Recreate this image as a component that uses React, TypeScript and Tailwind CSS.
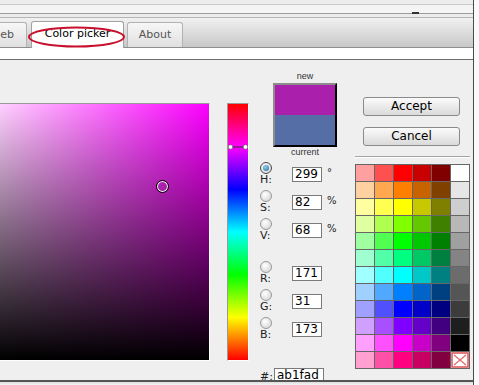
import React from "react";

const palette = [
  ["#ffa0a0", "#ff5050", "#ff0000", "#c80000", "#800000", "#ffffff"],
  ["#ffd0a0", "#ffa850", "#ff8000", "#c86400", "#804000", "#e6e6e6"],
  ["#ffffa0", "#ffff50", "#ffff00", "#c8c800", "#808000", "#cecece"],
  ["#e0ffa0", "#b0ff50", "#80ff00", "#64c800", "#408000", "#b8b8b8"],
  ["#a0ffa0", "#50ff50", "#00ff00", "#00c800", "#008000", "#a0a0a0"],
  ["#a0ffd0", "#50ffa8", "#00ff80", "#00c864", "#008040", "#848484"],
  ["#a0ffff", "#50ffff", "#00ffff", "#00c8c8", "#008080", "#6c6c6c"],
  ["#a0d0ff", "#50a8ff", "#0080ff", "#0064c8", "#004080", "#555555"],
  ["#a0a0ff", "#5050ff", "#0000ff", "#0000c8", "#000080", "#3c3c3c"],
  ["#d0a0ff", "#a850ff", "#8000ff", "#6400c8", "#400080", "#1e1e1e"],
  ["#ffa0ff", "#ff50ff", "#ff00ff", "#c800c8", "#800080", "#000000"],
  ["#ffa0d0", "#ff50a8", "#ff0080", "#c80064", "#800040", "none"],
];

const Radio = ({ on }: { on?: boolean }) => (
  <span
    className={`flex h-[12px] w-[12px] items-center justify-center rounded-full border bg-[radial-gradient(circle_at_40%_35%,#ffffff,#cfcfcf)] ${
      on ? "border-[#4a4a4a]" : "border-[#9a9a9a]"
    }`}
  >
    {on && (
      <span className="h-[6px] w-[6px] rounded-full bg-[radial-gradient(circle_at_40%_35%,#8fd4f2,#1d6890)]" />
    )}
  </span>
);

const Field = ({
  label,
  value,
  unit,
  on,
}: {
  label: string;
  value: string;
  unit?: string;
  on?: boolean;
}) => (
  <div className="flex h-[28px] items-start">
    <div className="ml-[2px] flex w-[16px] flex-col pt-[1px]">
      <Radio on={on} />
      <span className="text-[11px] leading-[11px] text-[#222]">{label}</span>
    </div>
    <div className="ml-[16px] mt-[6px] h-[15px] w-[30px] border border-[#7a7a7a] bg-white pl-[2px] text-[12px] leading-[13px] text-black">
      {value}
    </div>
    {unit && (
      <span className="ml-[5px] mt-[7px] text-[10px] leading-[10px] text-[#222]">
        {unit}
      </span>
    )}
  </div>
);

const Tab = ({
  children,
  active,
  className = "",
}: {
  children: React.ReactNode;
  active?: boolean;
  className?: string;
}) => (
  <div
    className={`flex items-center justify-center rounded-t-[3px] border border-b-0 text-[11px] ${
      active
        ? "relative z-10 -mb-px h-[27px] border-[#a2a2a2] bg-white pb-[1px] text-black"
        : "h-[25px] border-[#b2b2b2] bg-gradient-to-b from-[#f7f7f7] to-[#e0e0e0] text-[#555]"
    } ${className}`}
  >
    {children}
  </div>
);

export default function App() {
  return (
    <div className="relative flex h-[385px] w-[479px] overflow-hidden bg-[#f8f8f8] font-['DejaVu_Sans',sans-serif]">
      <div className="flex w-[474px] flex-col border-r border-[#4b4b4b]">
        {/* window chrome */}
        <div className="h-[4px] bg-[#ededed]" />
        <div className="h-px bg-[#c9c9c9]" />
        <div className="h-[8px] bg-[#f4f4f4]" />
        <div className="relative h-px bg-[#9c9c9c]">
          <span className="absolute left-[412px] top-[-1px] h-[2px] w-[7px] bg-[#333]" />
        </div>
        <div className="h-[3px] bg-[#ececec]" />
        <div className="relative flex h-[31px] items-end gap-0 border-y border-t-[#b4b4b4] border-b-[#8e8e8e] bg-gradient-to-b from-[#f1f1f1] to-[#c8c8c8]">
          <Tab className="ml-[-34px] w-[61px] justify-end pr-[12px]">eb</Tab>
          <Tab active className="ml-[4px] w-[93px]">
            Color picker
          </Tab>
          <Tab className="ml-[3px] w-[56px]">About</Tab>
          <svg
            className="pointer-events-none absolute left-[27px] top-[8px] z-20"
            width="99"
            height="23"
            viewBox="0 0 99 23"
          >
            <ellipse
              cx="49.5"
              cy="11"
              rx="47.5"
              ry="9.5"
              fill="none"
              stroke="#c8102e"
              strokeWidth="2"
            />
          </svg>
        </div>
        <div className="h-[11px] bg-white" />
        <div className="h-px bg-[#6c6c6c]" />

        {/* content */}
        <div className="flex h-[320px] items-start overflow-hidden bg-[#efefef]">
          {/* saturation / value square */}
          <div className="ml-[-48px] mt-[43px] shrink-0 border border-b-white border-l-[#9a9a9a] border-r-white border-t-[#9a9a9a]">
            <div className="relative h-[256px] w-[256px] bg-[linear-gradient(to_right,#ffffff,#fc00ff)]">
              <div className="absolute inset-0 bg-gradient-to-t from-black to-transparent" />
              <span className="absolute left-[203px] top-[76px] h-[13px] w-[13px] rounded-full border border-black shadow-[inset_0_0_0_1px_#ffffff]" />
            </div>
          </div>

          {/* hue bar */}
          <div className="ml-[17px] mt-[43px] shrink-0 border border-b-white border-l-[#9a9a9a] border-r-white border-t-[#9a9a9a]">
            <div className="relative h-[256px] w-[20px] bg-[linear-gradient(to_bottom,#ff0000_0%,#ff00ff_16.67%,#0000ff_33.33%,#00ffff_50%,#00ff00_66.67%,#ffff00_83.33%,#ff0000_100%)]">
              <svg className="absolute left-0 top-[39px]" width="20" height="8" viewBox="0 0 20 8">
                <line x1="4" y1="4" x2="16" y2="4" stroke="#333" strokeWidth="1" />
                <circle cx="2.5" cy="4" r="2.3" fill="#fff" stroke="#555" strokeWidth="0.6" />
                <circle cx="17.5" cy="4" r="2.3" fill="#fff" stroke="#555" strokeWidth="0.6" />
              </svg>
            </div>
          </div>

          {/* values column */}
          <div className="ml-[9px] flex w-[87px] shrink-0 flex-col">
            <div className="ml-[15px] mt-[11px] w-[64px] text-center font-['Liberation_Sans',sans-serif] text-[9px] leading-[10px] text-[#333]">
              new
            </div>
            <div className="ml-[15px] mt-[2px] h-[64px] w-[64px] border-2 border-b-black border-l-[#8c8c8c] border-r-black border-t-[#8c8c8c]">
              <div className="h-[30px] bg-[#ab1fad]" />
              <div className="h-[30px] bg-[#566ea6]" />
            </div>
            <div className="ml-[15px] w-[64px] text-center font-['Liberation_Sans',sans-serif] text-[9px] leading-[10px] text-[#333]">
              current
            </div>
            <div className="mt-[4px] flex flex-col">
              <Field label="H:" value="299" unit="°" on />
              <Field label="S:" value="82" unit="%" />
              <Field label="V:" value="68" unit="%" />
              <div className="h-[15px]" />
              <Field label="R:" value="171" />
              <Field label="G:" value="31" />
              <Field label="B:" value="173" />
            </div>
            <div className="mt-[24px] flex items-start">
              <span className="ml-[2px] mt-[3px] w-[12px] text-[11px] leading-[11px] text-[#222]">
                #:
              </span>
              <div className="ml-[2px] h-[16px] w-[50px] border border-[#7a7a7a] bg-white pl-[2px] text-[12px] leading-[13px] text-black">
                ab1fad
              </div>
            </div>
          </div>

          {/* buttons & palette */}
          <div className="ml-[10px] flex w-[115px] shrink-0 flex-col">
            <button className="ml-[8px] mt-[37px] h-[19px] w-[97px] rounded-[3px] border border-[#8a8a8a] bg-gradient-to-b from-[#fbfbfb] to-[#dadada] text-[12px] leading-[17px] text-black">
              Accept
            </button>
            <button className="ml-[8px] mt-[11px] h-[19px] w-[97px] rounded-[3px] border border-[#8a8a8a] bg-gradient-to-b from-[#fbfbfb] to-[#dadada] text-[12px] leading-[17px] text-black">
              Cancel
            </button>
            <div className="mt-[10px] h-px bg-[#a4a4a4]" />
            <div className="h-px bg-white" />
            <div className="mt-[6px] grid w-[115px] grid-cols-[repeat(6,18px)] grid-rows-[repeat(12,16px)] gap-px border border-[#666] bg-[#666]">
              {palette.flat().map((c, i) =>
                c === "none" ? (
                  <div key={i} className="bg-white">
                    <svg width="18" height="16" viewBox="0 0 18 16">
                      <rect x="1" y="1" width="16" height="14" fill="#fff" stroke="#e05050" strokeWidth="1.5" />
                      <line x1="3" y1="3" x2="15" y2="13" stroke="#e06a6a" strokeWidth="1.2" />
                      <line x1="15" y1="3" x2="3" y2="13" stroke="#e06a6a" strokeWidth="1.2" />
                    </svg>
                  </div>
                ) : (
                  <div key={i} style={{ background: c }} />
                )
              )}
            </div>
          </div>
        </div>
        <div className="h-[2px] bg-[#555]" />
        <div className="flex-1 bg-gradient-to-b from-[#dcdcdc] to-[#f6f6f6]" />
      </div>
      <div className="flex-1 bg-[#fafafa]" />
    </div>
  );
}
